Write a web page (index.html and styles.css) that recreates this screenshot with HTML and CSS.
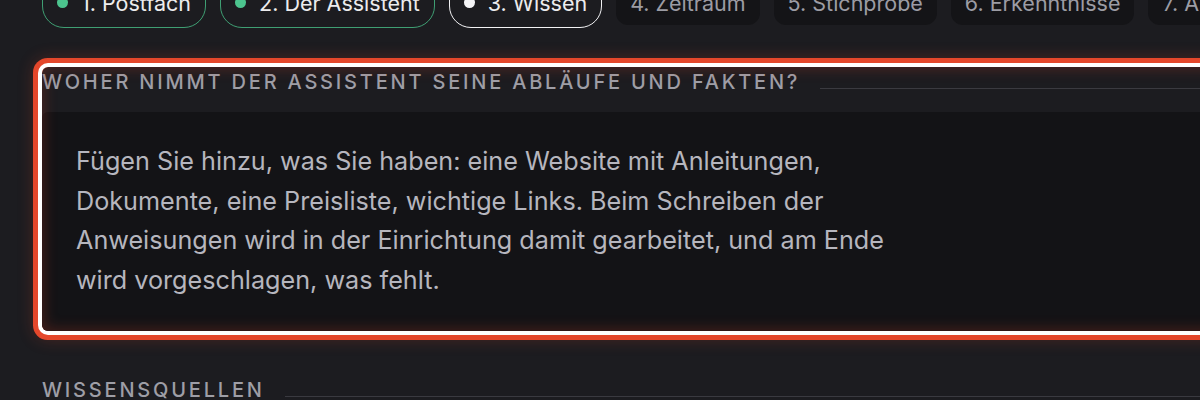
FILE: index.html
```html
<!DOCTYPE html>
<html lang="de">
<head>
<meta charset="utf-8">
<title>Wissen</title>
<link rel="stylesheet" href="styles.css">
</head>
<body>
<div class="page">
  <nav class="steps">
    <span class="step done"><i class="dot"></i>1. Postfach</span>
    <span class="step done"><i class="dot"></i>2. Der Assistent</span>
    <span class="step current"><i class="dot"></i>3. Wissen</span>
    <span class="step">4. Zeitraum</span>
    <span class="step">5. Stichprobe</span>
    <span class="step">6. Erkenntnisse</span>
    <span class="step">7. Anweisungen</span>
  </nav>

  <section class="block highlighted">
    <div class="block-head">
      <h2 class="block-title">Woher nimmt der Assistent seine Abläufe und Fakten?</h2>
      <span class="rule"></span>
    </div>
    <div class="card">
      <p class="card-text">Fügen Sie hinzu, was Sie haben: eine Website mit Anleitungen, Dokumente, eine Preisliste, wichtige Links. Beim Schreiben der Anweisungen wird in der Einrichtung damit gearbeitet, und am Ende wird vorgeschlagen, was fehlt.</p>
    </div>
  </section>

  <section class="block">
    <div class="block-head">
      <h2 class="block-title">Wissensquellen</h2>
      <span class="rule"></span>
    </div>
  </section>
</div>
</body>
</html>
```

FILE: styles.css
```css
html, body {
  margin: 0;
  padding: 0;
  overflow: hidden;
  background: #1c1c20;
}

body {
  font-family: "Inter", "Noto Sans", sans-serif;
  color: #b8b8c0;
}

.page {
  width: 1300px;
  padding-left: 42px;
}

/* step pills */
.steps {
  display: flex;
  align-items: center;
  gap: 14px;
  margin-top: -23px;
}

.step {
  display: flex;
  align-items: center;
  gap: 13px;
  font-size: 21.5px;
  line-height: 26px;
  color: #9c9ca4;
  background: #141417;
  border-radius: 12px;
  padding: 9px 14px;
  white-space: nowrap;
}

.step.done,
.step.current {
  background: transparent;
  border: 1.5px solid #3f9f73;
  border-radius: 22px;
  padding: 11.5px 14px 11.5px 14px;
  color: #ececee;
}

.step.current {
  border-color: #f2f2f4;
}

.dot {
  width: 11px;
  height: 11px;
  border-radius: 50%;
  background: #4cc48e;
  flex: none;
}

.step.current .dot {
  background: #f4f4f6;
}

/* sections */
.block {
  margin-top: 44px;
}

.block.highlighted {
  margin-top: 39px;
  position: relative;
  border-radius: 6px;
  box-shadow:
    0 0 0 4px #ffffff,
    0 0 0 9px #e4472b,
    0 0 16px 9px rgba(228, 71, 43, 0.22);
}

.block.highlighted::after {
  content: "";
  position: absolute;
  inset: 0;
  border-radius: 6px;
  box-shadow: inset 0 0 14px 2px rgba(200, 60, 40, 0.28);
  pointer-events: none;
}

.block-head {
  display: flex;
  align-items: flex-end;
  margin-bottom: 15px;
}

.block-title {
  margin: 0;
  font-size: 20px;
  line-height: 30px;
  font-weight: 500;
  letter-spacing: 0.14em;
  text-transform: uppercase;
  color: #9e9ea6;
  white-space: nowrap;
}

.rule {
  flex: 1;
  height: 1px;
  background: #3a3a40;
  margin: 0 0 8px 20px;
}

.card {
  background: #131316;
  border-radius: 6px;
  padding: 30px 28px 31px 34px;
}

.card-text {
  margin: 0;
  max-width: 830px;
  font-size: 25.2px;
  line-height: 39.5px;
  color: #b6b6be;
}
```
